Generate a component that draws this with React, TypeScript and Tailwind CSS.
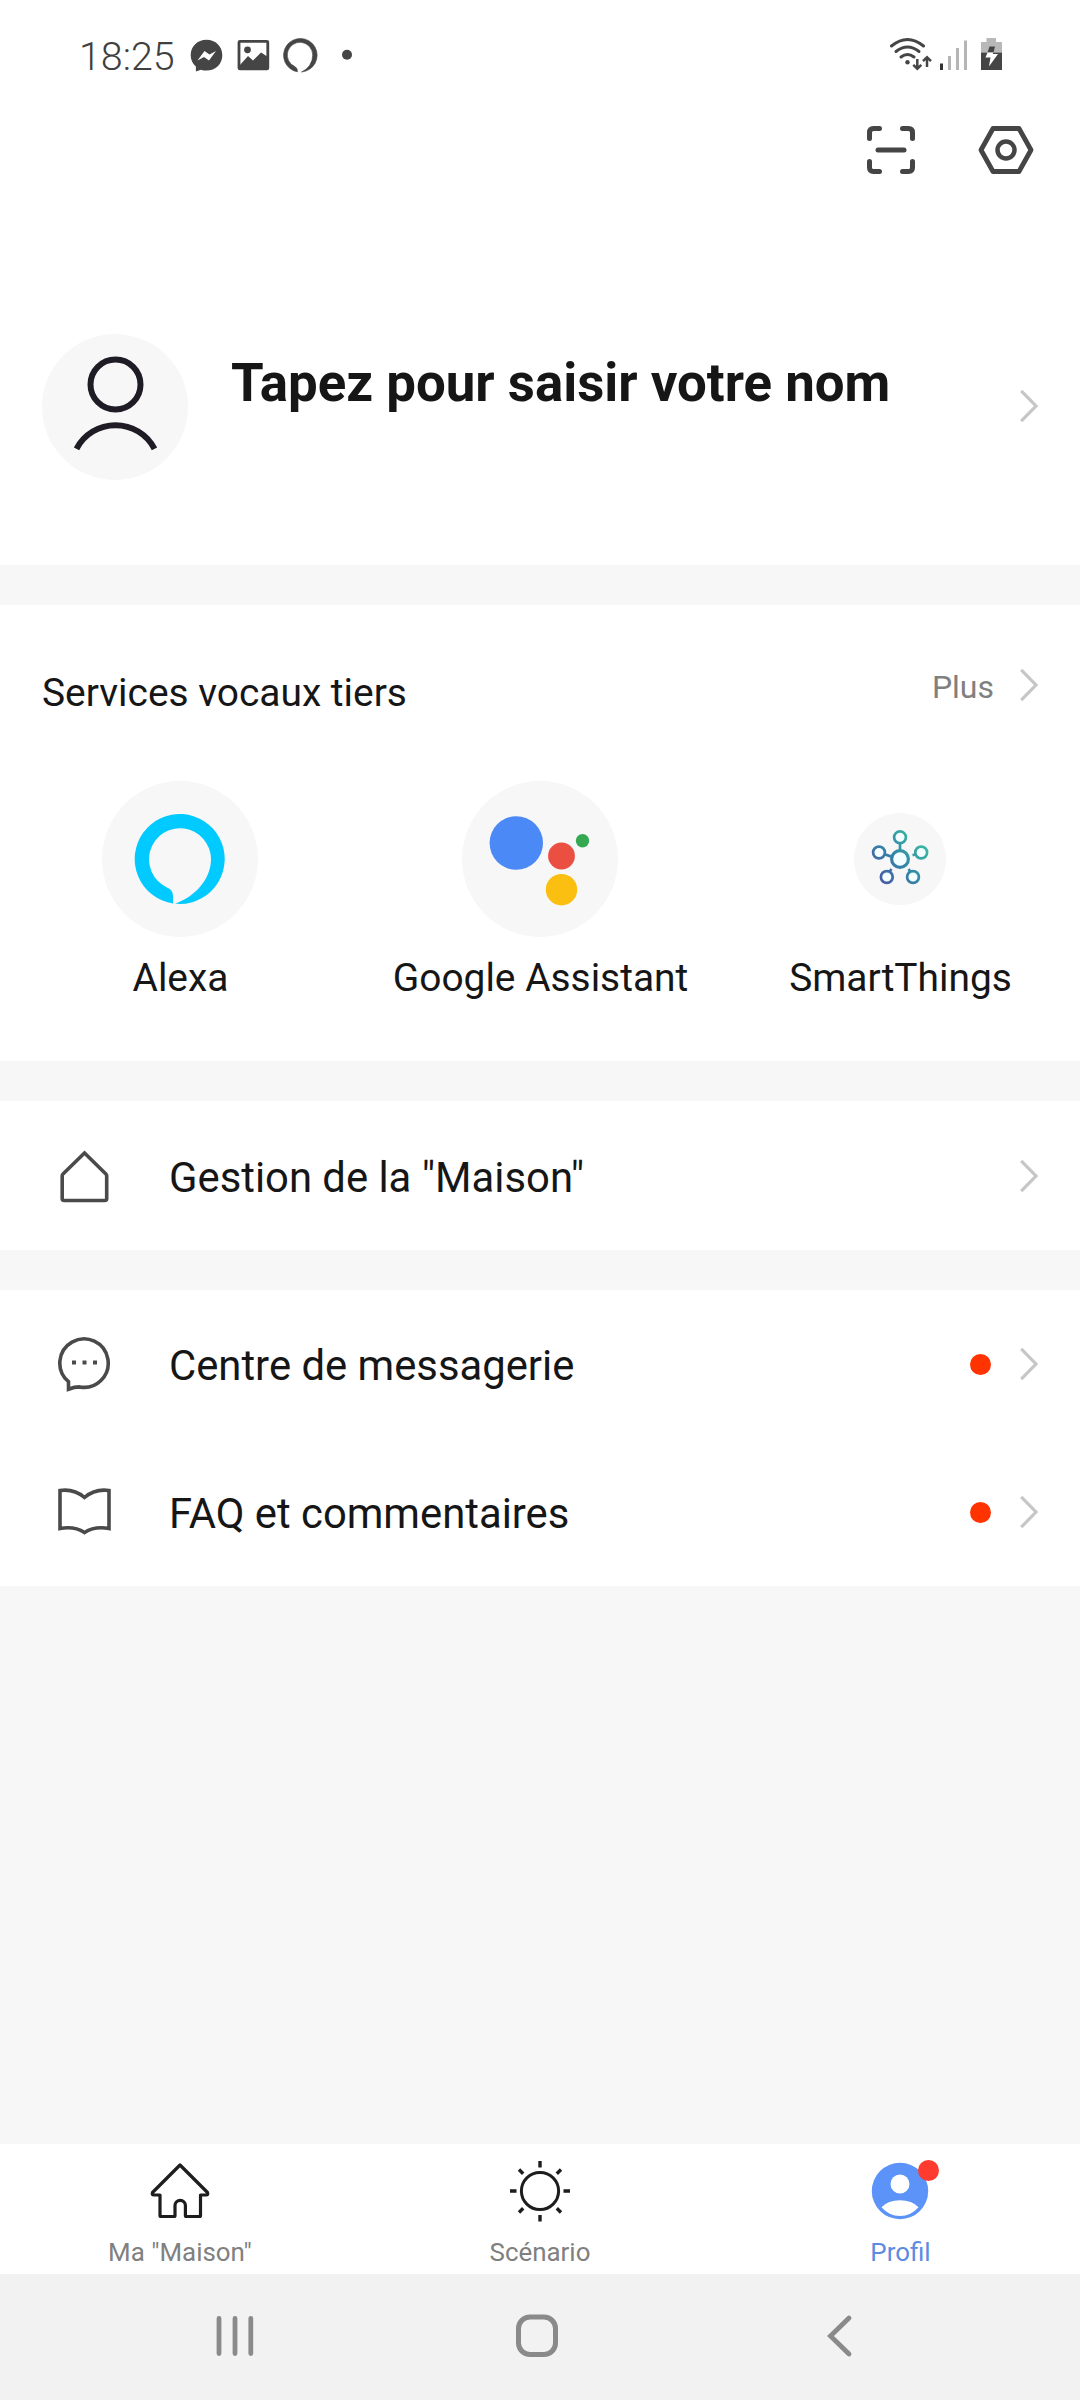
import type { ReactNode } from 'react';

function Chevron() {
  return (
    <svg width="20" height="34" viewBox="0 0 20 34" fill="none" stroke="#c6c6c6" strokeWidth="3.2" className="shrink-0">
      <path d="M2.2 1.8 17 17 2.2 32.2" />
    </svg>
  );
}

function StatusBar() {
  return (
    <div className="flex h-[112px] items-center pl-[79px]">
      <span className="w-[111px] pt-[2px] text-[39.4px] leading-[48px] font-light text-[#3f3f3f]">18:25</span>

      {/* notifications */}
      <svg width="166" height="40" viewBox="190 36 166 40">
        <path d="M206.5 39.8c-9.2 0-15.8 6.8-15.8 15.4 0 4.6 1.9 8.6 5.2 11.4v4.9l5-1.8c1.7.6 3.6.9 5.6.9 9.2 0 15.8-6.8 15.8-15.4s-6.6-15.4-15.8-15.4z" fill="#454545" />
        <path d="m197.5 60.5 7-9.5 5 3.6 6.5-3.6-7 9.5-5-3.6z" fill="#fff" />
        <rect x="239" y="41.3" width="28.8" height="27.6" rx="1" fill="none" stroke="#454545" strokeWidth="2.8" />
        <circle cx="247.5" cy="49.8" r="3.4" fill="#454545" />
        <path d="M240 65v4h28V57l-7-4.5-8 8-5-4.5z" fill="#454545" />
        <path d="M297.5 71.8A16.8 16.8 0 1 1 301.5 72 18 18 0 0 0 312.7 55.2A12.7 12.7 0 1 0 295.2 66.8Q297.5 68 297.5 71.8z" fill="#454545" stroke="#454545" strokeWidth="0.6" />
        <circle cx="347" cy="54.8" r="5" fill="#454545" />
      </svg>

      <svg width="118" height="40" viewBox="887 36 118 40" className="mr-[75px] ml-auto">
        <g fill="none" stroke="#454545" strokeWidth="3" strokeLinecap="round">
          <path d="M891.5 46q16-13 32 0" />
          <path d="M896 51.5q11.5-9 23 0" />
          <path d="M901 57q6.5-5 13 0" />
        </g>
        <circle cx="907.5" cy="62.2" r="2.2" fill="#454545" />
        <g fill="none" stroke="#454545" strokeWidth="2.5">
          <path d="M917.3 59v10M913.3 64.8l4 4 4-4" />
          <path d="M927 67V57M923 61.2l4-4 4 4" />
        </g>
        <path d="M941.5 63.5V70" stroke="#333" strokeWidth="3" />
        <path d="M949.5 56v14M957.5 48v22M965.5 40.5V70" stroke="#b5b5b5" strokeWidth="3" />
        <path d="M981 52.5V42h5.5v-4h9.5v4h6v10.5z" fill="#b8b8b8" />
        <path d="M981 52.5h21V70h-21z" fill="#454545" />
        <path d="M989.5 46.5h5.5l-1.5 6h-6z" fill="#454545" />
        <path d="M987.5 52.5h6l-.8 1.5h5.3l-9 12.5 1.5-9h-5z" fill="#fff" />
      </svg>
    </div>
  );
}

function TopActions() {
  return (
    <div className="flex h-[75px] items-center justify-end gap-[61px] pr-[45px]">
      <svg width="50" height="50" viewBox="0 0 50 50" fill="none" stroke="#454545" strokeWidth="5" strokeLinecap="round">
        <path d="M3.5 13.5V7.5q0-4 4-4h6M36.5 3.5h6q4 0 4 4v6M46.5 36.5v6q0 4-4 4h-6M13.5 46.5h-6q-4 0-4-4v-6" />
        <path d="M12 25h26" />
      </svg>
      <svg width="58" height="50" viewBox="0 0 58 50" fill="none" stroke="#454545" strokeLinejoin="round">
        <path d="M16 3.5h26L54 25 42 46.5H16L4 25z" strokeWidth="4.8" />
        <circle cx="29" cy="25" r="8.5" strokeWidth="4.5" />
      </svg>
    </div>
  );
}

function ProfileCard() {
  return (
    <div className="flex h-[378px] items-start pt-[147px] pr-[41px] pl-[42px]">
      <svg width="146" height="146" viewBox="0 0 146 146" className="rounded-full bg-[#f7f7f8]" fill="none" stroke="#1f1c26" strokeWidth="6">
        <circle cx="73.5" cy="50.5" r="25" />
        <path d="M34.5 114.8A44 44 0 0 1 112.5 114.8" />
      </svg>
      <h1 className="ml-[43px] flex h-[100px] items-center text-[52.8px] font-bold whitespace-nowrap text-[#161616]">Tapez pour saisir votre nom</h1>
      <div className="ml-auto flex h-[144px] items-center">
        <Chevron />
      </div>
    </div>
  );
}

function AlexaIcon() {
  return (
    <svg width="156" height="156" viewBox="0 0 156 156">
      <path d="M71 122.5A45 45 0 1 1 78 123Q75 123 73 122.6C93 116 109 98 109 78A31 31 0 1 0 64.5 106.2Q71 108.5 71 115z" fill="#00caff" />
    </svg>
  );
}

function GoogleAssistantIcon() {
  return (
    <svg width="156" height="156" viewBox="0 0 156 156">
      <circle cx="54.3" cy="62" r="26.7" fill="#4a89f6" />
      <circle cx="99.5" cy="75" r="13.4" fill="#ea4f42" />
      <circle cx="120.5" cy="59.8" r="6.7" fill="#35a852" />
      <circle cx="99.5" cy="108.7" r="15.7" fill="#fbbf12" />
    </svg>
  );
}

function SmartThingsIcon() {
  return (
    <svg width="92" height="92" viewBox="0 0 92 92">
      <defs>
        <linearGradient id="st" gradientUnits="userSpaceOnUse" x1="24" y1="66" x2="68" y2="28">
          <stop offset="0" stopColor="#4a5aa6" />
          <stop offset="0.5" stopColor="#3287a6" />
          <stop offset="1" stopColor="#3bb9a3" />
        </linearGradient>
      </defs>
      <g fill="#f4fdff" stroke="url(#st)" strokeWidth="2.7">
        <path d="M46 30.5V37.5M30.5 41.3l7 2.3M61.5 41.3l-3 .9M35.8 58.5l1.6-2.5M56.2 58.5l-1.6-2.5" />
        <circle cx="46" cy="46" r="8.4" strokeWidth="3.2" />
        <circle cx="46" cy="24.3" r="5.9" />
        <circle cx="25" cy="39.5" r="5.9" />
        <circle cx="67.2" cy="39.5" r="5.9" />
        <circle cx="32.8" cy="64" r="5.9" />
        <circle cx="59" cy="64" r="5.9" />
      </g>
    </svg>
  );
}

function Service({ label, children }: { label: string; children: ReactNode }) {
  return (
    <div className="flex flex-col items-center">
      <div className="flex h-[156px] items-center justify-center">
        <div className="rounded-full bg-[#f7f7f8]">{children}</div>
      </div>
      <span className="mt-[17px] pl-px text-[38.9px] leading-[48px] whitespace-nowrap">{label}</span>
    </div>
  );
}

function VoiceServices() {
  return (
    <section className="mt-10 h-[456px] bg-white">
      <div className="flex h-[160px] items-center pr-[41px] pl-[42px]">
        <h2 className="pt-[15px] text-[38.9px] leading-[48px]">Services vocaux tiers</h2>
        <span className="ml-auto pt-[3px] pr-[25px] text-[32px] leading-[40px] text-[#808080]">Plus</span>
        <Chevron />
      </div>
      <div className="grid grid-cols-3 pt-4">
        <Service label="Alexa">
          <AlexaIcon />
        </Service>
        <Service label="Google Assistant">
          <GoogleAssistantIcon />
        </Service>
        <Service label="SmartThings">
          <SmartThingsIcon />
        </Service>
      </div>
    </section>
  );
}

function HomeIcon() {
  return (
    <path d="M28.5 5 7 26q-.8.8-.8 2V50.500q0 2 2 2h40.500q2 0 2-2V28q0-1.200-.8-2z" />
  );
}

function MessageIcon() {
  return (
    <>
      <path d="M12.5 53.200V45.700A24.200 24.200 0 1 1 23.500 50.900Q18.500 50.900 12.500 53.200z" />
      <path d="M16 26.500h4M26.500 26.500h4M37 26.500h4" strokeWidth="4" />
    </>
  );
}

function BookIcon() {
  return (
    <path d="M28.5 13.5Q18 4.5 4 6.5V44.5Q18.5 42 28.5 48.5 38.5 42 53 44.5V6.5Q39 4.5 28.5 13.5z" />
  );
}

function MenuRow({ icon, label, unread }: { icon: ReactNode; label: string; unread?: boolean }) {
  return (
    <div className="flex h-[148px] items-center pr-[41px] pl-[56px]">
      <svg width="57" height="56" viewBox="0 0 57 56" fill="none" stroke="#4a4a4a" strokeWidth="3.6">
        {icon}
      </svg>
      <span className="ml-[56px] pt-1 text-[41.8px] leading-[50px]">{label}</span>
      <div className="ml-auto flex items-center gap-[28px]">
        {unread && <span className="size-[21px] rounded-full bg-[#ff3300]" />}
        <Chevron />
      </div>
    </div>
  );
}

function TabBar() {
  return (
    <nav className="mt-auto grid h-[130px] shrink-0 grid-cols-3 bg-white pt-[15px] text-[25.9px] leading-[34px] text-[#808080]">
      <div className="flex flex-col items-center gap-[12px]">
        <svg width="64" height="64" viewBox="0 0 64 64" fill="none" stroke="#1d1d1d" strokeWidth="3.2" strokeLinejoin="round">
          <path d="M32 6 4.5 33.5Q3.5 36 6 36H12V56.5Q12 57.5 13 57.5H26Q27 57.5 27 56.5V46.5a5.2 5.2 0 0 1 10.4 0V56.5Q37.4 57.5 38.4 57.5H51.5Q52.5 57.5 52.5 56.5V36H58Q60.5 36 59.5 33.5z" />
        </svg>
        <span>Ma "Maison"</span>
      </div>
      <div className="flex flex-col items-center gap-[12px]">
        <svg width="64" height="64" viewBox="0 0 64 64" fill="none" stroke="#1d1d1d" strokeWidth="3.4">
          <circle cx="32" cy="32" r="18.6" strokeWidth="3" />
          <path d="M32 2v6.5M32 56v6.5M2 32h6.5M55.5 32H62M11 10.5l4.2 4.2M48.8 14.7l4.2-4.2M11 53.5l4.2-4.2M48.8 49.3l4.2 4.2" />
        </svg>
        <span>Scénario</span>
      </div>
      <div className="flex flex-col items-center gap-[12px] text-[#5d8bdf]">
        <div className="relative">
          <svg width="64" height="64" viewBox="0 0 64 64">
            <circle cx="32" cy="32" r="28.2" fill="#5c93f9" />
            <circle cx="32" cy="25" r="9.5" fill="#fff" />
            <path d="M13.5 48.3Q20 41.3 32 41.3t18.5 7Q43 57 32 57t-18.5-8.7z" fill="#fff" />
          </svg>
          <span className="absolute top-[1px] -right-[7px] size-[21px] rounded-full bg-[#ff3b30]" />
        </div>
        <span className="pl-px">Profil</span>
      </div>
    </nav>
  );
}

function SystemNav() {
  return (
    <div className="flex h-[126px] shrink-0 items-center gap-[254px] bg-[#f2f2f2] pl-[211px]">
      <svg width="48" height="48" viewBox="0 0 48 48" stroke="#8a8a8a" strokeWidth="4.8" strokeLinecap="round">
        <path d="M8 5.5v35M24 5.5v35M39.8 5.5v35" />
      </svg>
      <svg width="48" height="48" viewBox="0 0 48 48" fill="none" stroke="#8a8a8a" strokeWidth="5">
        <rect x="5.5" y="4" width="37" height="37.5" rx="11.5" />
      </svg>
      <svg width="48" height="48" viewBox="0 0 48 48" fill="none" stroke="#8a8a8a" strokeWidth="4.8" strokeLinecap="round">
        <path d="M34 5 15.5 23 34 41" />
      </svg>
    </div>
  );
}

export default function App() {
  return (
    <main className="flex h-[2400px] w-[1080px] flex-col overflow-hidden bg-[#f7f7f7] font-['Roboto',sans-serif] text-[#161616]">
      <header className="h-[565px] shrink-0 bg-white">
        <StatusBar />
        <TopActions />
        <ProfileCard />
      </header>

      <VoiceServices />

      <section className="mt-10 bg-white pt-px">
        <MenuRow icon={<HomeIcon />} label={'Gestion de la "Maison"'} />
      </section>

      <section className="mt-10 bg-white">
        <MenuRow icon={<MessageIcon />} label="Centre de messagerie" unread />
        <MenuRow icon={<BookIcon />} label="FAQ et commentaires" unread />
      </section>

      <TabBar />
      <SystemNav />
    </main>
  );
}
